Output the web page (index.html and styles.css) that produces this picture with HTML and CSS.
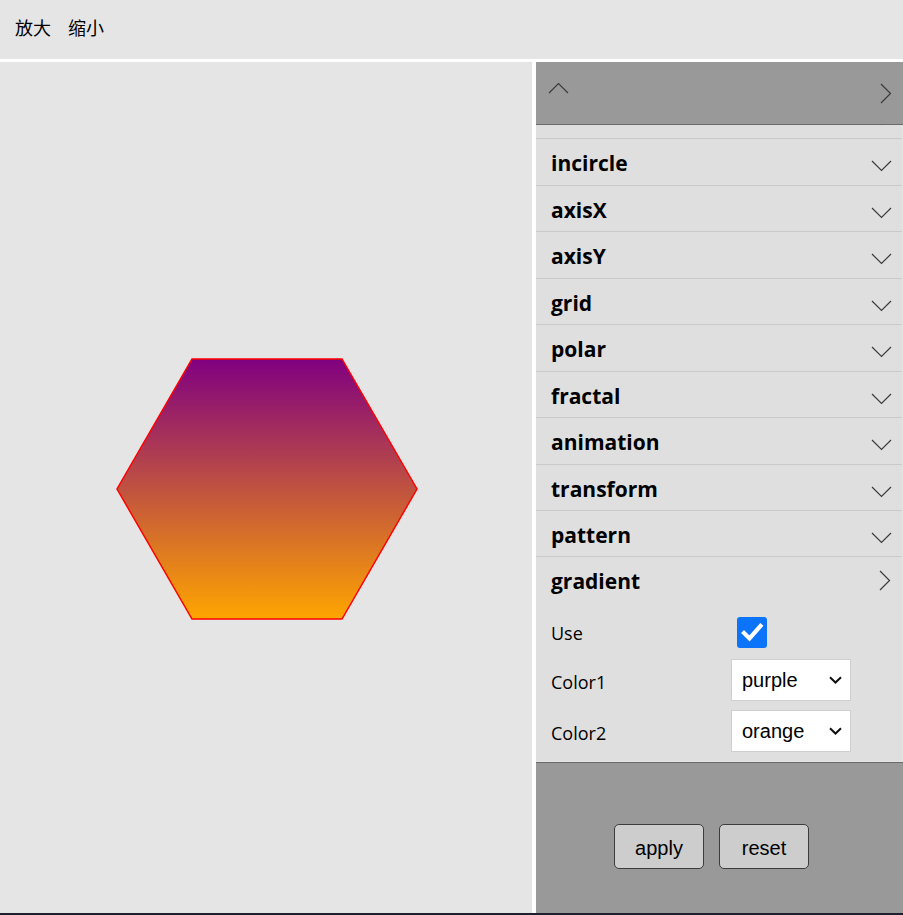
FILE: index.html
```html
<!DOCTYPE html>
<html lang="zh">
<head>
<meta charset="utf-8">
<title>Shape editor</title>
<link rel="stylesheet" href="styles.css">
</head>
<body>
<div class="topbar">
  <span class="tool">放大</span>
  <span class="tool">缩小</span>
</div>
<div class="main">
  <div class="canvas">
    <svg class="hexagon" width="302" height="262" viewBox="0 0 302 262">
      <defs>
        <linearGradient id="g" x1="0" y1="0" x2="0" y2="1">
          <stop offset="0" stop-color="purple"/>
          <stop offset="1" stop-color="orange"/>
        </linearGradient>
      </defs>
      <polygon points="76,1 226,1 301,131 226,261 76,261 1,131" fill="url(#g)" stroke="red" stroke-width="1.5"/>
    </svg>
  </div>
  <div class="panel">
    <div class="panel-head">
      <svg width="21" height="12" viewBox="0 0 21 12"><path d="M1 11 L10.5 1.5 L20 11" fill="none" stroke="#3a3a3a" stroke-width="1.2"/></svg>
      <svg class="head-right" width="12" height="21" viewBox="0 0 12 21"><path d="M1 1 L10.5 10.5 L1 20" fill="none" stroke="#3a3a3a" stroke-width="1.2"/></svg>
    </div>
    <div class="list">
      <div class="list-inner">
        <div class="row"><span class="title"></span><svg class="down" width="21" height="12" viewBox="0 0 21 12"><path d="M1 1 L10.5 10.5 L20 1" fill="none" stroke="#3a3a3a" stroke-width="1.2"/></svg></div>
        <div class="row"><span class="title">incircle</span><svg class="down" width="21" height="12" viewBox="0 0 21 12"><path d="M1 1 L10.5 10.5 L20 1" fill="none" stroke="#3a3a3a" stroke-width="1.2"/></svg></div>
        <div class="row"><span class="title">axisX</span><svg class="down" width="21" height="12" viewBox="0 0 21 12"><path d="M1 1 L10.5 10.5 L20 1" fill="none" stroke="#3a3a3a" stroke-width="1.2"/></svg></div>
        <div class="row"><span class="title">axisY</span><svg class="down" width="21" height="12" viewBox="0 0 21 12"><path d="M1 1 L10.5 10.5 L20 1" fill="none" stroke="#3a3a3a" stroke-width="1.2"/></svg></div>
        <div class="row"><span class="title">grid</span><svg class="down" width="21" height="12" viewBox="0 0 21 12"><path d="M1 1 L10.5 10.5 L20 1" fill="none" stroke="#3a3a3a" stroke-width="1.2"/></svg></div>
        <div class="row"><span class="title">polar</span><svg class="down" width="21" height="12" viewBox="0 0 21 12"><path d="M1 1 L10.5 10.5 L20 1" fill="none" stroke="#3a3a3a" stroke-width="1.2"/></svg></div>
        <div class="row"><span class="title">fractal</span><svg class="down" width="21" height="12" viewBox="0 0 21 12"><path d="M1 1 L10.5 10.5 L20 1" fill="none" stroke="#3a3a3a" stroke-width="1.2"/></svg></div>
        <div class="row"><span class="title">animation</span><svg class="down" width="21" height="12" viewBox="0 0 21 12"><path d="M1 1 L10.5 10.5 L20 1" fill="none" stroke="#3a3a3a" stroke-width="1.2"/></svg></div>
        <div class="row"><span class="title">transform</span><svg class="down" width="21" height="12" viewBox="0 0 21 12"><path d="M1 1 L10.5 10.5 L20 1" fill="none" stroke="#3a3a3a" stroke-width="1.2"/></svg></div>
        <div class="row"><span class="title">pattern</span><svg class="down" width="21" height="12" viewBox="0 0 21 12"><path d="M1 1 L10.5 10.5 L20 1" fill="none" stroke="#3a3a3a" stroke-width="1.2"/></svg></div>
        <div class="section">
          <div class="row open"><span class="title">gradient</span><svg class="right" width="12" height="21" viewBox="0 0 12 21"><path d="M1 1 L10.5 10.5 L1 20" fill="none" stroke="#3a3a3a" stroke-width="1.2"/></svg></div>
          <div class="fields">
            <div class="field field-use">
              <span class="label">Use</span>
              <span class="check"><svg width="30" height="31" viewBox="0 0 30 31"><rect x="0" y="0" width="30" height="31" rx="3" fill="#0b74fb"/><path d="M7 16 L12.5 21.5 L23.5 9" fill="none" stroke="#fff" stroke-width="4.2" stroke-linecap="square"/></svg></span>
            </div>
            <div class="field field-c1">
              <span class="label">Color1</span>
              <span class="select"><span class="sel-text">purple</span><svg width="13" height="8" viewBox="0 0 13 8"><path d="M1 1.2 L6.5 6.5 L12 1.2" fill="none" stroke="#111" stroke-width="2"/></svg></span>
            </div>
            <div class="field">
              <span class="label">Color2</span>
              <span class="select"><span class="sel-text">orange</span><svg width="13" height="8" viewBox="0 0 13 8"><path d="M1 1.2 L6.5 6.5 L12 1.2" fill="none" stroke="#111" stroke-width="2"/></svg></span>
            </div>
          </div>
        </div>
      </div>
    </div>
    <div class="panel-foot">
      <button class="btn">apply</button><button class="btn">reset</button>
    </div>
  </div>
</div>
<div class="bottom-line"></div>
</body>
</html>
```

FILE: styles.css
```css
html, body {
  margin: 0;
  padding: 0;
}
body {
  background: #e5e5e5;
  width: 903px;
  height: 915px;
  overflow: hidden;
  font-family: "Open Sans", "Noto Sans", sans-serif;
  color: #000;
}
.topbar {
  height: 59px;
  box-sizing: border-box;
  border-bottom: 3px solid #ffffff;
  display: flex;
  align-items: flex-start;
  gap: 17px;
  padding: 15px 0 0 15px;
  box-sizing: content-box;
  height: 44px;
  font-family: "Noto Sans CJK SC", sans-serif;
  font-size: 18px;
}
.tool {
  line-height: 24px;
}
.main {
  display: flex;
  height: 851px;
  background: #ffffff;
}
.canvas {
  width: 532px;
  background: #e5e5e5;
  display: flex;
  align-items: center;
  justify-content: center;
  padding: 2px 0 0 1px;
  box-sizing: border-box;
}
.hexagon {
  display: block;
}
.panel {
  margin-left: 4px;
  width: 367px;
  display: flex;
  flex-direction: column;
  background: #e5e5e5;
}
.panel-head {
  height: 63px;
  box-sizing: border-box;
  background: #999999;
  border-bottom: 1px solid #6a6a6a;
  display: flex;
  justify-content: space-between;
  align-items: flex-start;
  padding: 20px 11px 0 12px;
}
.panel-head svg {
  display: block;
}
.head-right {
  margin-top: 1px;
}
.list {
  flex: 1;
  overflow: hidden;
  background: #e5e5e5;
}
.list-inner {
  margin-top: -32px;
  margin-right: 1px;
  background: #dfdfdf;
}
.row {
  height: 46.44px;
  box-sizing: border-box;
  border-bottom: 1px solid #c9c9c9;
  display: flex;
  justify-content: space-between;
  align-items: flex-start;
  padding: 0 10px 0 15px;
}
.row.open {
  border-bottom: none;
}
.title {
  font-weight: 700;
  font-size: 21px;
  line-height: 46px;
  padding-top: 1px;
}
.down {
  display: block;
  margin-top: 21px;
}
.right {
  display: block;
  margin-top: 13px;
  margin-right: 1px;
}
.fields {
  padding: 11px 0 9px 15px;
}
.field {
  display: grid;
  grid-template-columns: 180px 120px;
  align-items: center;
  height: 42px;
  margin-bottom: 9px;
}
.field-use {
  height: 36px;
  margin-bottom: 8px;
}
.field:last-child {
  margin-bottom: 0;
}
.label {
  font-size: 18px;
  line-height: 24px;
  padding-top: 5px;
}
.field-use .label {
  padding-top: 0;
}
.check {
  display: block;
  width: 30px;
  height: 31px;
  margin-left: 6px;
}
.check svg {
  display: block;
}
.select {
  display: flex;
  align-items: center;
  justify-content: space-between;
  box-sizing: border-box;
  width: 120px;
  height: 42px;
  background: #ffffff;
  border: 1px solid #cfcfcf;
  padding: 1px 8px 0 10px;
  font-family: "Liberation Sans", Arial, sans-serif;
  font-size: 20px;
}
.select svg {
  display: block;
}
.panel-foot {
  height: 151px;
  box-sizing: border-box;
  background: #999999;
  border-top: 1px solid #6a6a6a;
  padding: 61px 1px 0 0;
  text-align: center;
}
.btn {
  width: 90px;
  height: 45px;
  margin: 0 15px 0 0;
  padding: 4px 0 0 0;
  background: #cdcdcd;
  border: 1px solid #3c3c3c;
  border-radius: 5px;
  font-family: "Liberation Sans", Arial, sans-serif;
  font-size: 20px;
  color: #000;
  vertical-align: top;
}
.bottom-line {
  height: 2px;
  background: #1f1d30;
}
```
